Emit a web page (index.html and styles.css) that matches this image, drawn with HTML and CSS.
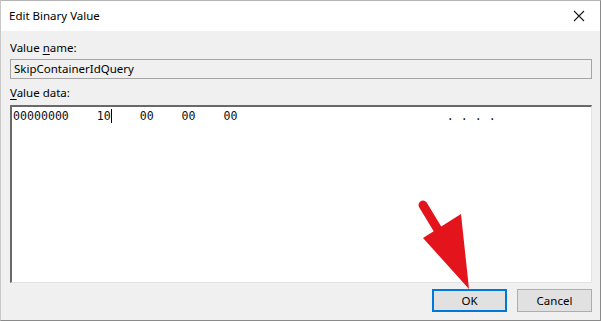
FILE: index.html
```html
<!DOCTYPE html>
<html lang="en">
<head>
    <meta charset="UTF-8">
    <meta name="viewport" content="width=device-width, initial-scale=1.0">
    <title>Edit Binary Value</title>
    <link rel="stylesheet" href="styles.css">
</head>
<body>
    <div class="window">
        <div class="titlebar">
            <span class="title">Edit Binary Value</span>
            <svg class="close" width="12" height="12" viewBox="0 0 12 12">
                <path d="M1 1 L11 11 M11 1 L1 11" stroke="#1a1a1a" stroke-width="1.1" fill="none"/>
            </svg>
        </div>
        <div class="content">
            <div class="label">Value <u>n</u>ame:</div>
            <div class="name-box">SkipContainerIdQuery</div>
            <div class="label label-data"><u>V</u>alue data:</div>
            <div class="data-box">
                <div class="data-line"><span>00000000    10</span><span class="caret"></span><span>    00    00    00                              . . . .</span></div>
            </div>
            <div class="buttons">
                <button class="btn btn-default">OK</button>
                <button class="btn">Cancel</button>
            </div>
        </div>
        <svg class="arrow" width="70" height="100" viewBox="0 0 70 100">
            <path d="M7 8 L30 46" stroke="#e3141c" stroke-width="9" stroke-linecap="round" fill="none"/>
            <polygon points="7,41 45,17 53,92" fill="#e3141c"/>
        </svg>
    </div>
</body>
</html>
```

FILE: styles.css
```css
body {
    margin: 0;
    font-family: "Noto Sans", "Open Sans", sans-serif;
    font-size: 11.5px;
    color: #000;
}
.window {
    position: relative;
    width: 601px;
    height: 321px;
    box-sizing: border-box;
    border: 1px solid #8a8a8a;
    border-top-color: #b5b5b5;
    border-left-color: #c8c8c8;
    display: flex;
    flex-direction: column;
    background-color: #f0f0f0;
}
.titlebar {
    height: 30px;
    background-color: #fff;
    display: flex;
    align-items: center;
    justify-content: space-between;
    padding: 0 15px 0 8px;
}
.title {
    font-size: 11.5px;
    line-height: 16px;
}
.content {
    flex: 1;
    display: flex;
    flex-direction: column;
    padding: 9px 8px 8px 9px;
}
.label {
    line-height: 16px;
    color: #000;
}
.label u {
    text-decoration-thickness: 1px;
    text-underline-offset: 2px;
}
.name-box {
    margin-top: 3px;
    height: 20px;
    box-sizing: border-box;
    border: 1px solid #a5a5a5;
    background-color: #f0f0f0;
    padding: 0 0 0 3px;
    line-height: 18px;
}
.label-data {
    margin-top: 6px;
}
.data-box {
    margin-top: 4px;
    flex: 1;
    background-color: #fff;
    border-top: 2px solid #696969;
    border-left: 2px solid #696969;
    border-right: 1px solid #e3e3e3;
    border-bottom: 1px solid #e3e3e3;
    padding: 1px 0 0 1px;
}
.data-line {
    font-family: "DejaVu Sans Mono", "Liberation Mono", monospace;
    font-size: 11.6px;
    line-height: 16px;
    white-space: pre;
    display: flex;
    align-items: center;
    color: #111;
}
.caret {
    width: 1px;
    height: 14px;
    background-color: #000;
}
.buttons {
    display: flex;
    justify-content: flex-end;
    gap: 10px;
    margin-top: 6px;
}
.btn {
    width: 75px;
    height: 23px;
    box-sizing: border-box;
    font-family: inherit;
    font-size: 11.5px;
    background-color: #e1e1e1;
    border: 1px solid #adadad;
    padding: 0;
    color: #000;
}
.btn-default {
    border: 2px solid #0078d7;
}
.arrow {
    position: absolute;
    left: 415px;
    top: 196px;
}
```
